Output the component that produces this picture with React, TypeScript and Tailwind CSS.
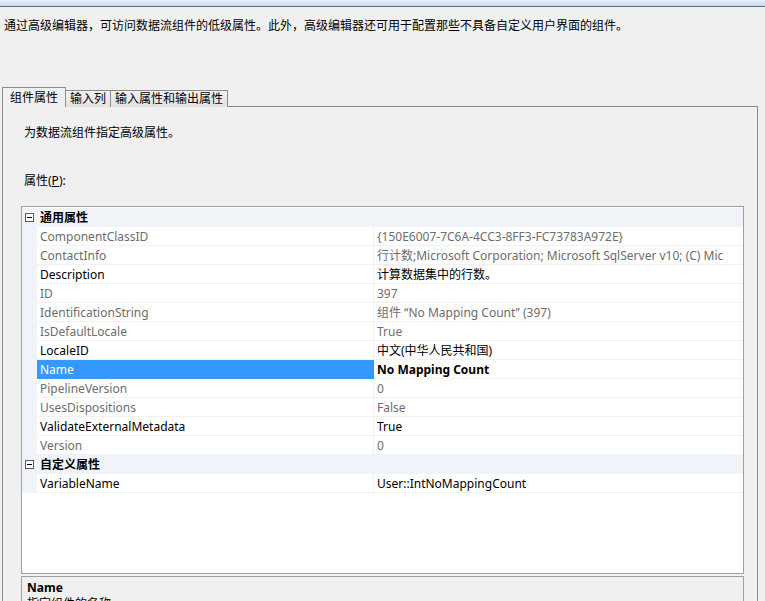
import React from "react";

type Row = { name: string; value: string; dim?: boolean; selected?: boolean; bold?: boolean };

const general: Row[] = [
  { name: "ComponentClassID", value: "{150E6007-7C6A-4CC3-8FF3-FC73783A972E}", dim: true },
  { name: "ContactInfo", value: "行计数;Microsoft Corporation; Microsoft SqlServer v10; (C) Mic", dim: true },
  { name: "Description", value: "计算数据集中的行数。" },
  { name: "ID", value: "397", dim: true },
  { name: "IdentificationString", value: "组件 “No Mapping Count” (397)", dim: true },
  { name: "IsDefaultLocale", value: "True", dim: true },
  { name: "LocaleID", value: "中文(中华人民共和国)" },
  { name: "Name", value: "No Mapping Count", selected: true, bold: true },
  { name: "PipelineVersion", value: "0", dim: true },
  { name: "UsesDispositions", value: "False", dim: true },
  { name: "ValidateExternalMetadata", value: "True" },
  { name: "Version", value: "0", dim: true },
];

const custom: Row[] = [{ name: "VariableName", value: "User::IntNoMappingCount" }];

function Minus() {
  return (
    <div className="w-[15px] flex items-center justify-center shrink-0">
      <div className="w-[9px] h-[9px] border border-[#5a5a5a] bg-white flex items-center justify-center">
        <div className="w-[5px] h-[1px] bg-black" />
      </div>
    </div>
  );
}

function Category({ label }: { label: string }) {
  return (
    <div className="h-[19px] flex items-center bg-[#f0f3f8] border-b border-[#f0f3f8]">
      <Minus />
      <div className="pl-[3px] pt-px font-bold text-black">{label}</div>
    </div>
  );
}

function PropRow({ r }: { r: Row }) {
  return (
    <div className="h-[19px] flex">
      <div className="w-[15px] shrink-0 bg-[#f0f3f8]" />
      <div
        className={
          "w-[337px] shrink-0 pl-[3px] pt-px flex items-center border-b border-r " +
          (r.selected ? "bg-[#3399ff] text-white border-[#3399ff]" : "bg-white border-[#f2f2f2] ") +
          (r.selected ? "" : r.dim ? "text-[#6d6d6d]" : "text-black")
        }
      >
        {r.name}
      </div>
      <div
        className={
          "flex-1 pl-[3px] pt-px flex items-center bg-white border-b border-[#f2f2f2] whitespace-nowrap overflow-hidden " +
          (r.dim ? "text-[#6d6d6d] " : "text-black ") +
          (r.bold ? "font-bold" : "")
        }
      >
        {r.value}
      </div>
    </div>
  );
}

export default function App() {
  return (
    <div
      className="w-[765px] h-[601px] bg-[#f0f0f0] overflow-hidden flex flex-col text-[12px] leading-[16px] text-black"
      style={{ fontFamily: '"Noto Sans", "Noto Sans CJK SC", sans-serif' }}
    >
      <div className="h-[7px] shrink-0 bg-gradient-to-b from-[#e8f0fa] to-[#c9d9ec] border-b border-[#5d6b7c]" />
      <div className="pl-[4px] pt-[11px] h-[80px] shrink-0">
        通过高级编辑器，可访问数据流组件的低级属性。此外，高级编辑器还可用于配置那些不具备自定义用户界面的组件。
      </div>
      <div className="flex items-end h-[20px] shrink-0 pl-[2px] relative z-10">
        <div className="h-[20px] px-[7px] flex items-center bg-[#f0f0f0] border border-b-0 border-[#898c95] text-black">组件属性</div>
        <div className="h-[17px] px-[4px] flex items-center bg-gradient-to-b from-[#f2f2f2] to-[#e3e3e3] border border-l-0 border-[#898c95] border-b-0">输入列</div>
        <div className="h-[17px] px-[4px] flex items-center bg-gradient-to-b from-[#f2f2f2] to-[#e3e3e3] border border-l-0 border-[#898c95] border-b-0">输入属性和输出属性</div>
      </div>
      <div className="ml-[2px] w-[756px] flex-1 border border-[#898c95] -mt-px flex flex-col bg-[#f0f0f0]">
        <div className="pl-[21px] pt-[18px] h-[66px] shrink-0">为数据流组件指定高级属性。</div>
        <div className="pl-[21px] h-[33px] shrink-0">
          属性(<span className="underline">P</span>):
        </div>
        <div className="ml-[18px] w-[723px] h-[368px] shrink-0 border border-[#a0a0a0] bg-white pt-px">
          <Category label="通用属性" />
          {general.map((r) => (
            <PropRow key={r.name} r={r} />
          ))}
          <Category label="自定义属性" />
          {custom.map((r) => (
            <PropRow key={r.name} r={r} />
          ))}
        </div>
        <div className="ml-[18px] mt-[2px] w-[723px] h-[60px] shrink-0 border border-[#a0a0a0] bg-[#f0f0f0] px-[5px] pt-[3px]">
          <div className="font-bold">Name</div>
          <div>指定组件的名称。</div>
        </div>
      </div>
    </div>
  );
}
